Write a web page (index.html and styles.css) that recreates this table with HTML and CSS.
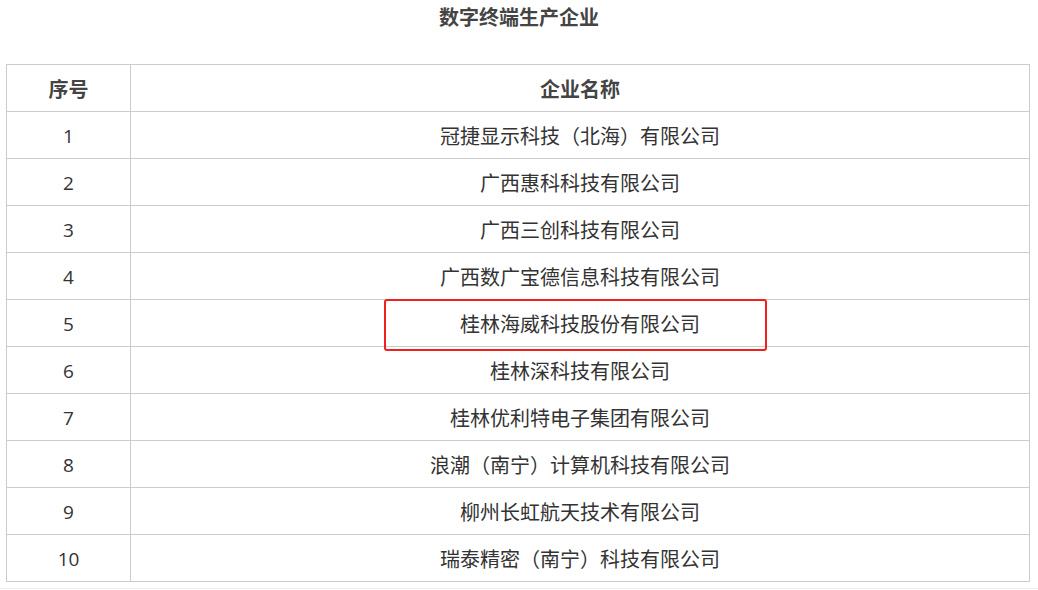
FILE: index.html
```html
<!DOCTYPE html>
<html lang="zh">
<head>
<meta charset="utf-8">
<link rel="stylesheet" href="styles.css">
</head>
<body>
<div class="page">
  <h2 class="title">数字终端生产企业</h2>
  <div class="table-wrap">
    <table class="list">
      <thead>
        <tr><th class="c-no">序号</th><th>企业名称</th></tr>
      </thead>
      <tbody>
        <tr><td class="c-no">1</td><td>冠捷显示科技（北海）有限公司</td></tr>
        <tr><td class="c-no">2</td><td>广西惠科科技有限公司</td></tr>
        <tr><td class="c-no">3</td><td>广西三创科技有限公司</td></tr>
        <tr><td class="c-no">4</td><td>广西数广宝德信息科技有限公司</td></tr>
        <tr><td class="c-no">5</td><td>桂林海威科技股份有限公司</td></tr>
        <tr><td class="c-no">6</td><td>桂林深科技有限公司</td></tr>
        <tr><td class="c-no">7</td><td>桂林优利特电子集团有限公司</td></tr>
        <tr><td class="c-no">8</td><td>浪潮（南宁）计算机科技有限公司</td></tr>
        <tr><td class="c-no">9</td><td>柳州长虹航天技术有限公司</td></tr>
        <tr><td class="c-no">10</td><td>瑞泰精密（南宁）科技有限公司</td></tr>
      </tbody>
    </table>
    <div class="highlight"></div>
  </div>
  <div class="sep"></div>
</div>
</body>
</html>
```

FILE: styles.css
```css
html, body {
  margin: 0;
  padding: 0;
  background: #fff;
}
body {
  font-family: "Noto Sans CJK SC", "Open Sans", sans-serif;
  color: #333;
}
.page {
  width: 1038px;
}
.title {
  margin: 0;
  height: 64px;
  padding-top: 3px;
  box-sizing: border-box;
  text-align: center;
  font-size: 20px;
  line-height: 28px;
  font-weight: bold;
  color: #444;
}
.table-wrap {
  position: relative;
  padding-left: 6px;
}
.list {
  border-collapse: collapse;
  width: 1024px;
  table-layout: fixed;
}
.list th, .list td {
  border: 1px solid #ccc;
  height: 45px;
  padding: 1px 0 0;
  text-align: center;
  font-size: 20px;
  line-height: 26px;
  color: #333;
}
.list th {
  font-weight: bold;
  color: #444;
}
.list .c-no {
  width: 123px;
}
.list td.c-no {
  font-family: "Open Sans", "Noto Sans CJK SC", sans-serif;
  font-size: 19px;
}
.highlight {
  position: absolute;
  left: 384px;
  top: 235px;
  width: 383px;
  height: 52px;
  box-sizing: border-box;
  border: 2px solid #f0201e;
  border-radius: 3px;
}
.sep {
  margin-top: 6px;
  border-top: 1px solid #eee;
}
```
